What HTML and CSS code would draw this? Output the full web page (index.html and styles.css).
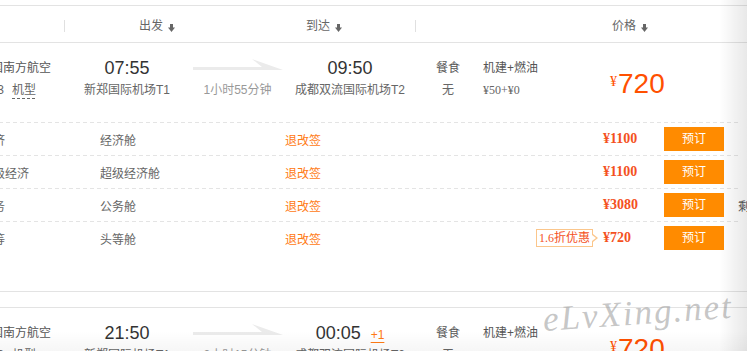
FILE: index.html
```html
<!DOCTYPE html>
<html lang="zh-CN">
<head>
<meta charset="utf-8">
<title>航班列表</title>
<link rel="stylesheet" href="styles.css">
</head>
<body>
<div class="viewport">
  <div class="page">
    <div class="thead">
      <div class="th th-air sep"></div>
      <div class="th th-dep"><span>出发</span><svg class="sort" width="7" height="8" viewBox="0 0 7 8"><rect x="2" y="0" width="3" height="4"/><polygon points="0,3.5 7,3.5 3.5,8"/></svg></div>
      <div class="th th-arr sep"><span>到达</span><svg class="sort" width="7" height="8" viewBox="0 0 7 8"><rect x="2" y="0" width="3" height="4"/><polygon points="0,3.5 7,3.5 3.5,8"/></svg></div>
      <div class="th th-price"><span>价格</span><svg class="sort" width="7" height="8" viewBox="0 0 7 8"><rect x="2" y="0" width="3" height="4"/><polygon points="0,3.5 7,3.5 3.5,8"/></svg></div>
    </div>

    <div class="card">
      <div class="flight">
        <div class="f-air">
          <div class="l1 airline">中国南方航空</div>
          <div class="l2 plane"><span class="ac">333</span><span class="model">机型</span></div>
        </div>
        <div class="f-dep">
          <div class="l1 time">07:55</div>
          <div class="l2">新郑国际机场T1</div>
        </div>
        <div class="f-dur">
          <div class="l1"><svg class="route" width="90" height="20" viewBox="0 0 90 20"><polygon points="0,9 69,9 59,1 90,12 0,12"/></svg></div>
          <div class="l2 dur">1小时55分钟</div>
        </div>
        <div class="f-arr">
          <div class="l1 time">09:50</div>
          <div class="l2">成都双流国际机场T2</div>
        </div>
        <div class="f-meal">
          <div class="l1">餐食</div>
          <div class="l2">无</div>
        </div>
        <div class="f-tax">
          <div class="l1">机建+燃油</div>
          <div class="l2 fee">¥50+¥0</div>
        </div>
        <div class="f-price"><span class="yen">¥</span><span class="big">720</span></div>
      </div>

      <div class="cabins">
        <div class="cabin">
          <div class="c-name">经济</div>
          <div class="c-type">经济舱</div>
          <div class="c-rule"><span class="rule">退改签</span></div>
          <div class="c-price">¥1100</div>
          <div class="c-btn"><button class="btn">预订</button></div>
          <div class="c-remain"></div>
        </div>
        <div class="cabin">
          <div class="c-name">超级经济</div>
          <div class="c-type">超级经济舱</div>
          <div class="c-rule"><span class="rule">退改签</span></div>
          <div class="c-price">¥1100</div>
          <div class="c-btn"><button class="btn">预订</button></div>
          <div class="c-remain"></div>
        </div>
        <div class="cabin">
          <div class="c-name">公务</div>
          <div class="c-type">公务舱</div>
          <div class="c-rule"><span class="rule">退改签</span></div>
          <div class="c-price">¥3080</div>
          <div class="c-btn"><button class="btn">预订</button></div>
          <div class="c-remain"><span>剩3张</span></div>
        </div>
        <div class="cabin">
          <div class="c-name">头等</div>
          <div class="c-type">头等舱</div>
          <div class="c-rule"><span class="rule">退改签</span><span class="promo">1.6折优惠</span></div>
          <div class="c-price">¥720</div>
          <div class="c-btn"><button class="btn">预订</button></div>
          <div class="c-remain"></div>
        </div>
      </div>
    </div>

    <div class="card">
      <div class="flight">
        <div class="f-air">
          <div class="l1 airline">中国南方航空</div>
          <div class="l2 plane"><span class="ac">333</span><span class="model">机型</span></div>
        </div>
        <div class="f-dep">
          <div class="l1 time">21:50</div>
          <div class="l2">新郑国际机场T1</div>
        </div>
        <div class="f-dur">
          <div class="l1"><svg class="route" width="90" height="20" viewBox="0 0 90 20"><polygon points="0,9 69,9 59,1 90,12 0,12"/></svg></div>
          <div class="l2 dur">2小时15分钟</div>
        </div>
        <div class="f-arr">
          <div class="l1 time">00:05<span class="plus">+1</span></div>
          <div class="l2">成都双流国际机场T2</div>
        </div>
        <div class="f-meal">
          <div class="l1">餐食</div>
          <div class="l2">无</div>
        </div>
        <div class="f-tax">
          <div class="l1">机建+燃油</div>
          <div class="l2 fee">¥50+¥0</div>
        </div>
        <div class="f-price"><span class="yen">¥</span><span class="big">720</span></div>
      </div>
    </div>
  </div>

  <div class="watermark">eLvXing.net</div>
  <div class="shade-r"></div>
  <div class="shade-b"></div>
</div>
</body>
</html>
```

FILE: styles.css
```css
* { box-sizing: border-box; }
html, body { margin: 0; padding: 0; background: #fff; }
body {
  font-family: "Liberation Sans", "Noto Sans CJK SC", sans-serif;
  font-size: 12px;
  color: #666;
}
.viewport { position: relative; width: 747px; height: 351px; overflow: hidden; }
.page { width: 790px; margin-left: -22px; padding-top: 5px; }

/* header */
.thead {
  display: flex;
  height: 38px;
  border-top: 1px solid #e3e3e3;
  border-bottom: 1px solid #e3e3e3;
}
.th { display: flex; align-items: center; padding-top: 4px; color: #666; }
.th span { line-height: 16px; }
.th.sep::after { content: ""; width: 1px; height: 12px; background: #e0e0e0; margin-left: auto; }
.th-air { width: 87px; }
.th-dep { width: 185px; padding-left: 74px; }
.th-arr { width: 166px; padding-left: 56px; }
.th-price { flex: 1; padding-left: 196px; }
.sort { fill: #666; margin-left: 5px; margin-top: 4px; }

/* card */
.card { border-bottom: 1px solid #e3e3e3; padding-bottom: 37px; }
.card + .card { margin-top: 15px; border-top: 1px solid #e3e3e3; }

.flight { display: flex; padding: 15px 0 22px; }
.l1 { height: 20px; line-height: 20px; white-space: nowrap; color: #555; }
.l2 { height: 20px; line-height: 20px; margin-top: 2px; white-space: nowrap; color: #666; }
.f-air { width: 86px; padding-left: 1px; }
.f-dep { width: 126px; text-align: center; }
.f-dur { width: 95px; text-align: center; }
.f-arr { width: 130px; text-align: center; }
.f-meal { width: 66px; text-align: center; }
.f-tax { width: 119px; padding-left: 2px; }
.f-price { flex: 1; padding-left: 10px; padding-top: 11px; color: #ff5000; white-space: nowrap; }

.plane { display: flex; align-items: flex-start; padding-left: 5px; }
.ac { line-height: 20px; }
.model {
  margin-left: 8px;
  padding-top: 1px;
  line-height: 18px;
  height: 20px;
  background: repeating-linear-gradient(90deg, #666 0 3px, transparent 3px 5px) left 18px / 100% 1px no-repeat;
}
.time { font-size: 18px; color: #333; }
.plus {
  font-size: 12px;
  color: #ff7a14;
  margin-left: 10px;
  text-decoration: underline;
  text-underline-offset: 3px;
}
.route { display: block; margin: 0 auto; fill: #ebebeb; }
.dur { color: #999; }
.fee { font-family: "Liberation Serif", serif; font-size: 12px; }
.yen { font-family: "Liberation Serif", serif; font-size: 14px; vertical-align: 7px; margin-right: 1px; }
.big { font-size: 28px; line-height: 30px; }

/* cabin rows */
.cabins { width: 762px; }
.cabin {
  display: flex;
  align-items: center;
  height: 33px;
  padding-top: 1px;
  background: repeating-linear-gradient(90deg, #e4e4e4 0 4px, transparent 4px 7px) left top / 100% 1px no-repeat;
  white-space: nowrap;
}
.c-name { width: 122px; padding-left: 3px; color: #666; }
.c-type { width: 185px; color: #666; }
.c-rule { flex: 1; display: flex; align-items: center; }
.rule { color: #ff7a14; }
.promo {
  position: relative;
  margin-left: auto;
  margin-right: 10px;
  height: 18px;
  line-height: 16px;
  padding: 0 2px;
  border: 1px solid #fbc68b;
  color: #f4511e;
  font-family: "Liberation Serif", "Noto Sans CJK SC", serif;
}
.promo::before {
  content: "";
  position: absolute;
  right: -6px;
  top: 4px;
  border-left: 5px solid #fbc68b;
  border-top: 4px solid transparent;
  border-bottom: 4px solid transparent;
}
.promo::after {
  content: "";
  position: absolute;
  right: -4px;
  top: 5px;
  border-left: 4px solid #fff;
  border-top: 3px solid transparent;
  border-bottom: 3px solid transparent;
}
.c-price {
  width: 61px;
  font-family: "Liberation Serif", serif;
  font-weight: bold;
  font-size: 14px;
  color: #f4511e;
}
.c-btn { width: 60px; }
.btn {
  display: block;
  width: 60px;
  height: 24px;
  margin: 0;
  padding: 0;
  border: 0;
  background: #ff8b00;
  color: #fff;
  font-family: "Liberation Sans", "Noto Sans CJK SC", sans-serif;
  font-size: 12px;
  line-height: 24px;
  text-align: center;
}
.c-remain { width: 16px; padding-left: 14px; color: #555; }

/* overlays */
.watermark {
  position: absolute;
  left: 543px;
  top: 300px;
  font-family: "Liberation Serif", serif;
  font-style: italic;
  font-size: 35px;
  line-height: 40px;
  letter-spacing: 2px;
  color: rgba(150, 150, 150, 0.55);
  transform: rotate(-4deg);
  transform-origin: left center;
  white-space: nowrap;
}
.shade-r {
  position: absolute;
  top: 0;
  right: 0;
  width: 28px;
  height: 100%;
  background: linear-gradient(to right, rgba(0,0,0,0), rgba(0,0,0,0.09));
}
.shade-b {
  position: absolute;
  left: 0;
  right: 0;
  bottom: 0;
  height: 20px;
  background: linear-gradient(rgba(0,0,0,0), rgba(0,0,0,0.035));
}
```
